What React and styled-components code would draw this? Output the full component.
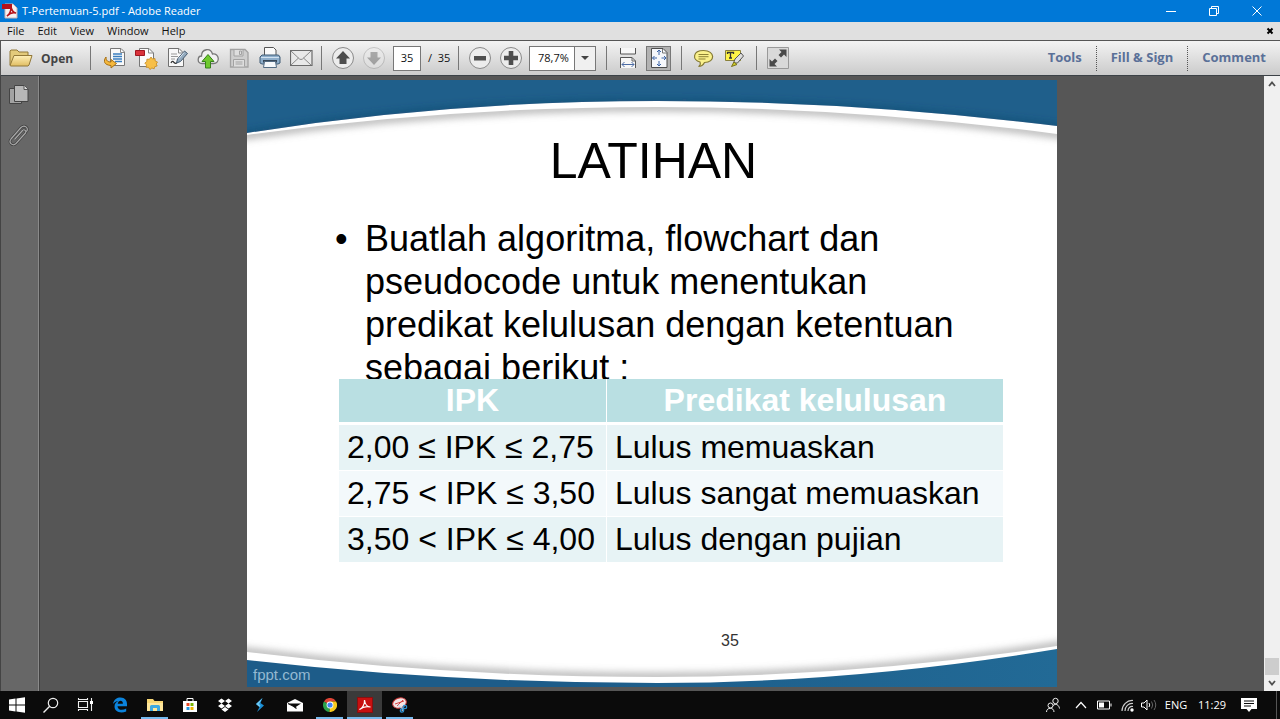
import React from "react";
import styled, { createGlobalStyle } from "styled-components";

const Global = createGlobalStyle`
  * { box-sizing: border-box; }
  body { margin: 0; background: #565656; font-family: "Open Sans", "Noto Sans", sans-serif; font-size: 11px; color: #111; }
  button, input, select { font: inherit; color: inherit; }
  button { border: 0; background: none; padding: 0; }
  svg { display: block; }
`;

const Page = styled.div`
  display: flex;
  flex-direction: column;
  min-height: 100vh;
`;

/* ---------- window chrome ---------- */
const TitleBar = styled.header`
  display: flex;
  align-items: center;
  height: 22px;
  padding: 0 2px;
  background: #0078d7;
  color: #fff;
`;
const WindowTitle = styled.h1`
  flex: 1;
  margin: 0 0 0 4px;
  font-size: 11px;
  line-height: 20px;
  font-weight: 400;
`;
const WindowButton = styled.button`
  display: grid;
  place-items: center;
  width: 43px;
  height: 20px;
`;
const MenuBar = styled.nav`
  display: flex;
  align-items: center;
  height: 19px;
  padding: 0 6px 0 7px;
  gap: 13px;
  background: #e0e0e0;
  border-bottom: 1px solid #555;
`;
const MenuItem = styled.button`
  line-height: 16px;
`;
const MenuClose = styled.button`
  margin-left: auto;
`;

/* ---------- toolbar ---------- */
const ToolBar = styled.div`
  display: flex;
  align-items: center;
  height: 35px;
  background: linear-gradient(#f3f3f3, #cbcbcb);
  border-bottom: 1px solid #3c4247;
  border-left: 1px solid #555;
`;
const OpenButton = styled.button`
  display: flex;
  align-items: center;
  gap: 8px;
  width: 82px;
  padding-left: 8px;
  font-size: 12px;
  font-weight: 700;
  color: #444;
`;
const ToolSpacer = styled.span`
  width: 4px;
`;
const ToolButton = styled.button`
  display: grid;
  place-items: center;
  width: 31px;
  height: 30px;
`;
const Pressed = styled.span`
  display: grid;
  place-items: center;
  width: 25px;
  height: 25px;
  background: #b2b2b2;
  border: 1px solid #777;
`;
const Divider = styled.span`
  width: 1px;
  height: 24px;
  margin: 0 5px 0 ${(p) => p.$before || 7}px;
  background: #777;
`;
const PageInput = styled.input`
  width: 28px;
  height: 25px;
  margin-left: 4px;
  padding: 0 0 2px;
  border: 1px solid #777;
  background: #fff;
  text-align: center;
`;
const PageTotal = styled.span`
  width: 30px;
  padding: 0 0 2px 7px;
  white-space: pre;
`;
const ZoomBox = styled.span`
  display: flex;
  position: relative;
  width: 67px;
  height: 25px;
  margin-left: 3px;
`;
const ZoomSelect = styled.select`
  appearance: none;
  width: 100%;
  padding: 0 0 2px 8px;
  border: 1px solid #777;
  border-radius: 0;
  background: #fff;
`;
const ZoomArrow = styled.span`
  position: absolute;
  inset: 1px 1px 1px auto;
  display: grid;
  place-items: center;
  width: 21px;
  background: #f0f0f0;
  border-left: 1px solid #777;
  pointer-events: none;
`;
const PanelLinks = styled.div`
  display: flex;
  margin-left: auto;
`;
const PanelButton = styled.button`
  height: 25px;
  padding: 0 14px 2px;
  font-size: 13px;
  font-weight: 700;
  color: #5a7098;
  white-space: nowrap;
  & + & { border-left: 1px dotted #555; }
`;

/* ---------- document area ---------- */
const Workspace = styled.div`
  display: flex;
  flex: 1;
`;
const SidePanel = styled.aside`
  display: flex;
  flex-direction: column;
  align-items: center;
  flex: none;
  width: 40px;
  padding: 7px 5px 0 0;
  gap: 16px;
  background: #676767;
  border-left: 1px solid #444;
  border-right: 1px solid #404040;
  box-shadow: inset -1px 0 #8a8a8a;
`;
const SideButton = styled.button`
  display: grid;
  place-items: center;
  width: 24px;
  height: 24px;
`;
const Viewport = styled.main`
  display: flex;
  flex: 1;
  justify-content: center;
  align-items: flex-start;
  padding: 4px 0;
  background: #565656;
`;
const ScrollBar = styled.div`
  display: flex;
  flex-direction: column;
  flex: none;
  align-items: center;
  width: 16px;
  background: #f0f0f0;
`;
const ScrollButton = styled.button`
  display: grid;
  place-items: center;
  width: 16px;
  height: 16px;
`;
const ScrollThumb = styled.span`
  width: 14px;
  height: 17px;
  margin-top: auto;
  background: #cdcdcd;
`;

/* ---------- slide ---------- */
const Slide = styled.article`
  position: relative;
  display: flex;
  flex-direction: column;
  width: 100%;
  max-width: 810px;
  min-height: 607px;
  padding-top: 51px;
  overflow: hidden;
  background: #fff;
  color: #000;
  font-family: "Liberation Sans", Arial, sans-serif;
`;
const Backdrop = styled.svg`
  position: absolute;
  inset: 0;
  width: 100%;
  height: 100%;
`;
const SlideTitle = styled.h2`
  position: relative;
  margin: 0 0 26px;
  padding-left: 3px;
  font-size: 50px;
  line-height: 60px;
  font-weight: 400;
  text-align: center;
`;
/* the last line runs under the table, so its descenders are cut off */
const Bullets = styled.ul`
  position: relative;
  height: 162px;
  margin: 0 0 0 88px;
  padding: 0;
  overflow: hidden;
  list-style: none;
`;
const Bullet = styled.li`
  display: flex;
  max-width: 632px;
  font-size: 36px;
  line-height: 43px;
  &::before { content: "•"; flex: none; width: 30px; }
`;
const Grades = styled.table`
  position: relative;
  width: 664px;
  margin-left: 92px;
  border-collapse: separate;
  border-spacing: 0;
  font-size: 32px;
  background: #fff;
`;
const HeadCell = styled.th`
  width: ${(p) => p.$width || "auto"};
  padding: 0;
  line-height: 43px;
  background: #b9dfe2;
  color: #fff;
  border-bottom: 3px solid #fff;
  & + th { border-left: 1px solid #fff; }
`;
const GradeRow = styled.tr`
  background: ${(p) => (p.$pale ? "#f3f9fb" : "#e7f3f5")};
`;
const Cell = styled.td`
  padding: 0 8px;
  line-height: 45px;
  white-space: nowrap;
  & + & { border-left: 1px solid #fff; }
  tr + tr > & { border-top: 1px solid #fff; }
`;
const SlideFooter = styled.footer`
  position: relative;
  display: grid;
  grid-template-columns: 1fr 1fr 1fr;
  margin-top: auto;
  padding: 0 6px 3px;
`;
const Brand = styled.span`
  align-self: end;
  font-size: 15px;
  line-height: 18px;
  color: #94b9d2;
`;
const SlideNumber = styled.span`
  margin: 0 0 34px 202px;
  font-size: 16px;
  line-height: 18px;
  color: #333;
`;

/* ---------- taskbar ---------- */
const TaskBar = styled.footer`
  display: flex;
  height: 28px;
  background: #0b0b0b;
  color: #fff;
`;
const TaskButton = styled.button`
  display: grid;
  place-items: center;
  width: ${(p) => (p.$system ? 34 : 35)}px;
  height: 28px;
  background: ${(p) =>
    p.$active
      ? "linear-gradient(#76b9ed, #76b9ed) bottom / 100% 2px no-repeat #3a3a3a"
      : p.$running
      ? "linear-gradient(#76b9ed, #76b9ed) bottom / 27px 2px no-repeat"
      : "none"};
`;
const Tray = styled.div`
  display: flex;
  margin-left: auto;
`;
const TrayButton = styled.button`
  display: grid;
  place-items: center;
  width: ${(p) => p.$width}px;
`;
const TrayText = styled(TrayButton)`
  padding-bottom: 2px;
`;
const ShowDesktop = styled.button`
  width: 4px;
  margin-left: 10px;
  border-left: 1px solid #555;
`;

/* ---------- icons ---------- */
const Svg = ({ w = 24, h = 24, children, ...rest }) => (
  <svg width={w} height={h} viewBox={`0 0 ${w} ${h}`} fill="none" aria-hidden="true" {...rest}>
    {children}
  </svg>
);
const ReaderIcon = () => (
  <Svg w={16} h={16}>
    <path d="M3 1h8l4 4v10H3z" fill="#f6f2f2" stroke="#c9b4b4" />
    <path d="M0 1h10v5H0z" fill="#b5121b" />
    <path d="M5 13c3-2 4-6 4-9 1 4 3 6 5 6-3-1-6 0-9 3z" stroke="#b5121b" strokeWidth="1.6" />
  </Svg>
);
const FolderIcon = () => (
  <Svg w={24} h={20}>
    <path d="M1 17V3l1-1h6l2 2h9v4" fill="#e3ca7b" stroke="#927838" />
    <path d="M1 17.500 5 7.500h18l-3 9.500-1 1H2z" fill="url(#folder)" stroke="#927838" />
    <defs><linearGradient id="folder" x2="0" y2="1"><stop stopColor="#fff0b8" /><stop offset="1" stopColor="#e0bd62" /></linearGradient></defs>
  </Svg>
);
const ConvertIcon = () => (
  <Svg>
    <path d="M6.500 2.500H17l3.500 3.500v13.500h-14z" fill="#fafafa" stroke="#777" />
    <path d="M16.500 2.500v4h4" stroke="#888" />
    <path d="M9 8h9M9 10.500h9M9 13h9M11 15.500h7" stroke="#3b7fc0" strokeWidth="1.400" />
    <path d="M2 11c-3 4-2 8 5 8.500V22l5.500-4.500L7 13.500V16c-3 0-5-1-5-5z" fill="#f5b83d" stroke="#a56f16" />
  </Svg>
);
const CreateIcon = () => (
  <Svg>
    <path d="M4.500 2.500H14l4.500 4.500v13.500h-14z" fill="#fafafa" stroke="#777" />
    <path d="M13.500 2.500V7h5" stroke="#888" />
    <path d="M.5 4.500h9v5h-9z" fill="#d9323a" stroke="#a01720" />
    <path d="m16 11 1.500 2 2.500-.5.200 2.500 2.300 1-1.300 2 1 2-2.400.6-.6 2.200-2.300-.8-2 1.500-1.300-2.100-2.500-.1.400-2.400-1.700-1.800 2-1.500.1-2.400 2.500.1z" fill="#f7bf48" stroke="#c48920" strokeWidth=".8" />
  </Svg>
);
const SignIcon = () => (
  <Svg>
    <path d="M2.500 2.500H13l4.500 4.500v13.500h-15z" fill="#f8f8f8" stroke="#707070" />
    <path d="M12.500 2.500V7h5" stroke="#888" />
    <path d="M5 8h6M5 10.500h7M5 13h4" stroke="#999" />
    <path d="M5 17c1-2 2-2 3-.5 1 1 2 1 3 .5" stroke="#333" strokeWidth="1.300" />
    <path d="m10.500 17 1-4 7-8 3 2.500-7 8z" fill="#93aabe" stroke="#465b70" />
    <path d="m13 12.500 5-6" stroke="#dce8f1" />
  </Svg>
);
const CloudIcon = () => (
  <Svg>
    <path d="M5 17.500C-.5 17.500.5 10 4.500 10 4.500 3 13.500 1 15.500 8c7-1 8 9.500 1 9.500z" fill="#f1f1f1" stroke="#777" strokeWidth="1.300" />
    <path d="m11 8.500 6 7h-3.500V22h-5v-6.500H5z" fill="#6fc92f" stroke="#36811a" />
  </Svg>
);
const SaveIcon = () => (
  <Svg>
    <path d="M2.500 3.500H17l3 3v14.500H2.500z" fill="#cecece" stroke="#a2a2a2" strokeWidth="1.300" />
    <path d="M6 4v6h9V4M5.500 20.500v-7h11v7" fill="#dedede" stroke="#a2a2a2" />
    <path d="M11.500 5v3.500h2V5zM7.500 16h7M7.500 18h7" stroke="#a2a2a2" />
  </Svg>
);
const PrintIcon = () => (
  <Svg>
    <path d="M5.500 9V1.500h9l2.500 2.500V9" fill="#fafafa" stroke="#555" />
    <path d="M3 9h16.500l1.500 2v6l-2 1H3l-2-1v-6z" fill="#8eaecb" stroke="#3f5a74" />
    <path d="M2 11.500h18" stroke="#d0e1f0" />
    <path d="M4 14h14v2.500H4z" fill="#37485a" />
    <path d="M5.500 15.500h11l1 6h-13z" fill="#f5f8fb" stroke="#536b83" />
  </Svg>
);
const MailToolIcon = () => (
  <Svg>
    <path d="M.5 4.500h21.500v15H.5z" fill="#e9e9e9" stroke="#6b6b6b" strokeWidth="1.200" />
    <path d="m1 5 8.500 8q1.500 1 3 0L21 5M1 19l7.500-7M21 19l-7.500-7" stroke="#888" />
  </Svg>
);
const RoundIcon = ({ faded, path }) => (
  <Svg opacity={faded ? 0.4 : 1}>
    <circle cx="12" cy="12" r="10.500" fill="#ececec" stroke="#8a8a8a" />
    <path d={path} fill="#4e4e4e" />
  </Svg>
);
const FitWidthIcon = () => (
  <Svg>
    <path d="M4.500 2v6h15V2" fill="#f7f7f7" stroke="#555" />
    <path d="M4.500 22V11.500H16l3.500 3.500v7" fill="#f7f7f7" stroke="#555" />
    <path d="M16 11.500V15h3.500" stroke="#666" />
    <path d="M6 18.500h12M8.500 16 6 18.500 8.500 21M15.500 16l2.500 2.500-2.500 2.500" stroke="#4c6ca5" />
  </Svg>
);
const FitPageIcon = () => (
  <Svg w={20} h={22}>
    <path d="M2.500 1.500H14l4 4v15H2.500z" fill="#f5f7fb" stroke="#4d4d4d" />
    <path d="M13.500 2v4H18" stroke="#777" />
    <path d="M10 3v5M8 5l2-2 2 2M10 19v-5M8 17l2 2 2-2M3.500 11H8M5.500 9l-2 2 2 2M17 11h-4.500M15 9l2 2-2 2" stroke="#3d65a8" />
  </Svg>
);
const CommentIcon = () => (
  <Svg>
    <path d="M12.500 4.500c12 0 12 12 1 12-1 2-3 4-6 4 2-1 2-3 1.500-4.500-8-2-7.500-11.500 3.500-11.500z" fill="#faf18c" stroke="#857a35" strokeWidth="1.200" />
    <path d="M7.500 8.500h10M7.500 10.700h10M7.500 13h7" stroke="#8d8235" />
  </Svg>
);
const HighlightIcon = () => (
  <Svg>
    <path d="M3.500 4.500h15v10h-15z" fill="#fff447" stroke="#89803b" />
    <path d="M5.500 8V6.500h6V8M8.500 6.500V12M7 12h3" stroke="#333" strokeWidth="1.300" />
    <path d="m11.500 17 1.500-4 6-6 2.500 3-6 7z" fill="#ddd" stroke="#555" />
    <path d="M9.500 20.500 12 16l3 2.500z" fill="#d3cf25" stroke="#77711b" />
  </Svg>
);
const ExpandIcon = () => (
  <Svg>
    <path d="M1.500 1.500h21v21h-21z" fill="#d9d9d9" stroke="#999" />
    <path d="M20.500 3.500V11L18 8.500l-3 3-2.500-2.500 3-3L13 3.500zM3.500 20.500V13L6 15.500l3-3 2.500 2.500-3 3 2.500 2.500z" fill="#4a4a4a" />
  </Svg>
);
const PagesIcon = () => (
  <Svg>
    <path d="M3.500 5.500h12v15h-12z" fill="#a3a3a3" stroke="#444" />
    <path d="M8.500 2.500h10l3.500 3.500v12.500H8.500z" fill="#b7b7b7" stroke="#444" />
    <path d="M18 2.500V6.500h4" fill="#ddd" stroke="#555" />
  </Svg>
);
const clipOutline = "M8.500 16.500 16.500 7.500c1.500-2 4.500.5 3 2.500L10 20.500c-3 3-8-.5-5-4.500L15 4.500c3.500-3.500 8 .5 5.500 4";
const ClipIcon = () => (
  <Svg>
    <path d={clipOutline} stroke="#3e3e3e" strokeWidth="2.600" />
    <path d={clipOutline} stroke="#a9a9a9" strokeWidth="1.200" />
  </Svg>
);

const EdgeIcon = () => (
  <Svg w={16} h={16}>
    <path d="M1 7C2 2 5 .5 8.500.5c4.500 0 6.500 3 6.500 6.500v2.200H5.500c.2 4 5 4.500 8.700 2.300v3C8 17 2.500 14.500 2.500 9.500c0-2.800 1.700-4.700 4-5.500C4 4 2 5.500 1 7zm4.700-.2h5.200C11 2.500 6.300 3 5.700 6.800z" fill="#0b83dc" fillRule="evenodd" />
  </Svg>
);
const ExplorerIcon = () => (
  <Svg w={16} h={16}>
    <path d="M0 2h6l1.500 2H16v10H0z" fill="#f8d775" />
    <path d="M0 6h16v8H0z" fill="#ffe79b" />
    <path d="M3 14V9.500Q3 8 4.500 8h7Q13 8 13 9.500V14h-3v-3H6v3z" fill="#3fa9e0" />
  </Svg>
);
const StoreIcon = () => (
  <Svg w={16} h={16}>
    <path d="M5 4V1.500h6V4" stroke="#fff" />
    <path d="M1 4h14v11H1z" fill="#fff" />
    <path d="M4.500 6H7.500v3h-3z" fill="#e74825" /><path d="M8.500 6h3v3h-3z" fill="#7bb705" />
    <path d="M4.500 10h3v3h-3z" fill="#2296de" /><path d="M8.500 10h3v3h-3z" fill="#f2b400" />
  </Svg>
);
const DropboxIcon = () => (
  <Svg w={16} h={16}>
    <path d="m4.500 1.500 3.500 2.500-3.500 2.500L1 4zM11.500 1.500 15 4l-3.500 2.500L8 4zM4.500 6.500 8 9l-3.500 2.500L1 9zM11.500 6.500 15 9l-3.500 2.500L8 9zM8 10l3.500 2.500L8 15l-3.500-2.500z" fill="#fff" />
  </Svg>
);
const BoltIcon = () => (
  <Svg w={16} h={16}>
    <path d="M10.500 1 4 7l3.500 3L5 15l7-6.500L8.500 6z" fill="#1b8ed4" />
    <path d="M10.500 1 4 7l3.500 3 1-1.500L7 7z" fill="#6cc9f5" />
  </Svg>
);
const MailIcon = () => (
  <Svg w={16} h={16}>
    <path d="M0 6 8 2l8 4v8.500H0z" fill="#fff" />
    <path d="M2 6.500h12L8 10.500z" fill="#0b0b0b" />
    <path d="m1 6.500 6 3 2.500 2" stroke="#0b0b0b" strokeWidth="1.200" />
  </Svg>
);
const ChromeIcon = () => (
  <Svg w={14} h={14}>
    <path d="M7 7 .9 3.500A7 7 0 0 1 13.100 3.500H7z" fill="#df4335" />
    <path d="M7 7 .9 3.500A7 7 0 0 0 6.500 14z" fill="#2ba24c" />
    <path d="M7 7 6.500 14A7 7 0 0 0 13.100 3.500H7z" fill="#f8c91d" />
    <circle cx="7" cy="7" r="3.400" fill="#fff" /><circle cx="7" cy="7" r="2.600" fill="#4285f4" />
  </Svg>
);
const AcrobatIcon = () => (
  <Svg w={16} h={16}>
    <rect x=".5" y=".5" width="15" height="15" fill="#c81010" stroke="#881010" />
    <path d="M2.500 12.500C5 12 8 7 7.500 3c.5 4 3 7 6 7-4-1-8 0-11 2.500z" stroke="#fff" strokeWidth="1.200" />
  </Svg>
);
const SnipIcon = () => (
  <Svg w={16} h={16}>
    <ellipse cx="7.500" cy="6" rx="7" ry="5" transform="rotate(-18 7.500 6)" fill="#f4e4e4" stroke="#c83535" />
    <path d="m3 7 9-3M5 9l6-6" stroke="#d64545" />
    <path d="m6 8 6 5M12.500 7 10 14" stroke="#c5d9ea" strokeWidth="1.200" />
    <circle cx="13" cy="10" r="1.700" stroke="#2d8fd0" strokeWidth="1.300" />
    <circle cx="10" cy="13.500" r="1.700" stroke="#2d8fd0" strokeWidth="1.300" />
  </Svg>
);

const tools = [
  ["Convert PDF", ConvertIcon],
  ["Create PDF", CreateIcon],
  ["Sign", SignIcon],
  ["Upload", CloudIcon],
  ["Save", SaveIcon],
  ["Print", PrintIcon],
  ["Email", MailToolIcon],
];
const grades = [
  ["2,00 ≤ IPK ≤ 2,75", "Lulus memuaskan"],
  ["2,75 < IPK ≤ 3,50", "Lulus sangat memuaskan"],
  ["3,50 < IPK ≤ 4,00", "Lulus dengan pujian"],
];
const apps = [
  ["Edge", EdgeIcon],
  ["File Explorer", ExplorerIcon, "running"],
  ["Store", StoreIcon],
  ["Dropbox", DropboxIcon],
  ["Shortcut", BoltIcon],
  ["Mail", MailIcon],
  ["Chrome", ChromeIcon, "running"],
  ["Adobe Reader", AcrobatIcon, "active"],
  ["Snipping Tool", SnipIcon, "running"],
];

const SlideBackdrop = () => (
  <Backdrop viewBox="0 0 810 607" preserveAspectRatio="none" fill="none" aria-hidden="true">
    <defs>
      <filter id="soft" x="-5%" y="-60%" width="110%" height="220%"><feGaussianBlur stdDeviation="4" /></filter>
      <clipPath id="inner"><path d="M0 55Q200 27 410 27Q605 27 810 54V566Q605 597 410 597Q200 597 0 572z" /></clipPath>
      <clipPath id="top"><path d="M0 0h810v46Q605 21 410 21Q200 21 0 53z" /></clipPath>
      <linearGradient id="sea"><stop offset=".4" stopColor="#1d5c89" /><stop offset="1" stopColor="#226a96" /></linearGradient>
    </defs>
    <path d="M0 0h810v46Q605 21 410 21Q200 21 0 53z" fill="#1f5f8b" />
    <g clipPath="url(#top)"><path d="M-20 57L0 54Q200 22 410 22Q605 22 810 47L830 50" stroke="#173f60" strokeWidth="3" filter="url(#soft)" /></g>
    <path d="M0 580Q200 603 410 603Q605 603 810 569V607H0z" fill="url(#sea)" />
    <g clipPath="url(#inner)">
      <path d="M-20 58L0 55Q200 27 410 27Q605 27 810 54L830 57" stroke="#888" strokeWidth="5" filter="url(#soft)" />
      <path d="M-20 569L0 572Q200 597 410 597Q605 597 810 566L830 563" stroke="#888" strokeWidth="5" filter="url(#soft)" />
    </g>
  </Backdrop>
);

export default function App() {
  return (
    <Page>
      <Global />
      <TitleBar>
        <ReaderIcon />
        <WindowTitle>T-Pertemuan-5.pdf - Adobe Reader</WindowTitle>
        <WindowButton aria-label="Minimize"><Svg w={10} h={10}><path d="M0 5.500h10" stroke="#fff" /></Svg></WindowButton>
        <WindowButton aria-label="Restore"><Svg w={10} h={10}><path d="M.5 2.500h7v7h-7zM2.500 2V.5h7v7H8" stroke="#fff" /></Svg></WindowButton>
        <WindowButton aria-label="Close"><Svg w={10} h={10}><path d="m.5.5 9 9m0-9-9 9" stroke="#fff" /></Svg></WindowButton>
      </TitleBar>
      <MenuBar>
        {["File", "Edit", "View", "Window", "Help"].map((m) => <MenuItem key={m}>{m}</MenuItem>)}
        <MenuClose aria-label="Close document"><Svg w={8} h={8}><path d="m1.500 1.500 5 5m0-5-5 5" stroke="#000" strokeWidth="2" /></Svg></MenuClose>
      </MenuBar>
      <ToolBar>
        <OpenButton><FolderIcon />Open</OpenButton>
        <Divider />
        <ToolSpacer />
        {tools.map(([label, Icon]) => <ToolButton key={label} aria-label={label}><Icon /></ToolButton>)}
        <Divider $before={4} />
        <ToolButton aria-label="Previous page"><RoundIcon path="m12 5 7 7.500h-3.500V18h-7v-5.500H5z" /></ToolButton>
        <ToolButton aria-label="Next page"><RoundIcon faded path="m12 19-7-7.500h3.500V6h7v5.500H19z" /></ToolButton>
        <PageInput aria-label="Page" defaultValue="35" />
        <PageTotal>/  35</PageTotal>
        <Divider />
        <ToolButton aria-label="Zoom out"><RoundIcon path="M6 10h12v4.500H6z" /></ToolButton>
        <ToolButton aria-label="Zoom in"><RoundIcon path="M9.700 5h4.600v4.700H19v4.600h-4.700V19H9.700v-4.700H5V9.700h4.700z" /></ToolButton>
        <ZoomBox>
          <ZoomSelect aria-label="Zoom level" defaultValue="78,7%"><option>78,7%</option></ZoomSelect>
          <ZoomArrow><Svg w={8} h={4}><path d="M0 0h8L4 4z" fill="#444" /></Svg></ZoomArrow>
        </ZoomBox>
        <Divider $before={10} />
        <ToolButton aria-label="Fit width"><FitWidthIcon /></ToolButton>
        <ToolButton aria-label="Fit page"><Pressed><FitPageIcon /></Pressed></ToolButton>
        <Divider />
        <ToolButton aria-label="Add note"><CommentIcon /></ToolButton>
        <ToolButton aria-label="Highlight text"><HighlightIcon /></ToolButton>
        <Divider />
        <ToolButton aria-label="Full screen"><ExpandIcon /></ToolButton>
        <PanelLinks>
          {["Tools", "Fill & Sign", "Comment"].map((p) => <PanelButton key={p}>{p}</PanelButton>)}
        </PanelLinks>
      </ToolBar>

      <Workspace>
        <SidePanel>
          <SideButton aria-label="Page thumbnails"><PagesIcon /></SideButton>
          <SideButton aria-label="Attachments"><ClipIcon /></SideButton>
        </SidePanel>
        <Viewport>
          <Slide>
            <SlideBackdrop />
            <SlideTitle>LATIHAN</SlideTitle>
            <Bullets>
              <Bullet>Buatlah algoritma, flowchart dan pseudocode untuk menentukan predikat kelulusan dengan ketentuan sebagai berikut :</Bullet>
            </Bullets>
            <Grades>
              <thead><tr><HeadCell $width="267px">IPK</HeadCell><HeadCell>Predikat kelulusan</HeadCell></tr></thead>
              <tbody>
                {grades.map(([range, grade], i) => (
                  <GradeRow key={range} $pale={i === 1}><Cell>{range}</Cell><Cell>{grade}</Cell></GradeRow>
                ))}
              </tbody>
            </Grades>
            <SlideFooter><Brand>fppt.com</Brand><SlideNumber>35</SlideNumber></SlideFooter>
          </Slide>
        </Viewport>
        <ScrollBar>
          <ScrollButton aria-label="Scroll up"><Svg w={8} h={6}><path d="m1 5 3-3.500L7 5" stroke="#505050" strokeWidth="1.800" /></Svg></ScrollButton>
          <ScrollThumb />
          <ScrollButton aria-label="Scroll down"><Svg w={8} h={6}><path d="m1 1 3 3.500L7 1" stroke="#505050" strokeWidth="1.800" /></Svg></ScrollButton>
        </ScrollBar>
      </Workspace>

      <TaskBar>
        <TaskButton $system aria-label="Start"><Svg w={16} h={16}><path d="M0 2.500 6.500 1.500v6H0zM7.500 1.400 16 .2v7.300H7.500zM0 8.500h6.500v6L0 13.500zM7.500 8.500H16v7.300l-8.500-1.200z" fill="#fff" /></Svg></TaskButton>
        <TaskButton $system aria-label="Search"><Svg w={16} h={16}><circle cx="10" cy="6" r="4.700" stroke="#eee" strokeWidth="1.200" /><path d="M6.700 9.300.5 15.500" stroke="#eee" strokeWidth="1.400" /></Svg></TaskButton>
        <TaskButton $system aria-label="Task view"><Svg w={16} h={16}><path d="M1.500 4.500h9v6h-9zM1.500 1v1.500h9V1M1.500 14v-1.500h9V14M14.500 1v13" stroke="#eee" strokeWidth="1.100" /><path d="M13 4h3v3h-3z" fill="#fff" /></Svg></TaskButton>
        {apps.map(([label, Icon, state]) => (
          <TaskButton key={label} aria-label={label} $running={state === "running"} $active={state === "active"}><Icon /></TaskButton>
        ))}
        <Tray>
          <TrayButton $width={31} aria-label="People"><Svg w={16} h={16}><circle cx="10.500" cy="4" r="2.700" stroke="#eee" /><path d="M8 8.500c3-2.500 6-.5 6.500 3" stroke="#eee" /><circle cx="5.500" cy="8.500" r="2.500" stroke="#eee" /><path d="M1.500 15c0-5 7.500-5 7.500 0" stroke="#eee" /></Svg></TrayButton>
          <TrayButton $width={25} aria-label="Hidden icons"><Svg w={12} h={8}><path d="m1 7 5-5.500L11 7" stroke="#fff" strokeWidth="1.200" /></Svg></TrayButton>
          <TrayButton $width={23} aria-label="Battery"><Svg w={15} h={10}><path d="M.5 1h12v8H.5zM14 3.500v3" stroke="#fff" /><path d="M2 2.500h5v5H2z" fill="#fff" /></Svg></TrayButton>
          <TrayButton $width={22} aria-label="Network"><Svg w={13} h={13}><path d="M1 12C1 6 6 1 12 1.500M4 12c0-4.500 3.500-8 8-7.500M7 12c0-3 2-5 5-4.500" stroke="#ccc" strokeWidth="1.200" /><circle cx="11" cy="11" r="1.700" fill="#fff" /></Svg></TrayButton>
          <TrayButton $width={22} aria-label="Volume"><Svg w={16} h={12}><path d="M.5 4h2.500l3-3v10L3 8H.5z" stroke="#fff" /><path d="M8 4q1.500 2 0 4" stroke="#fff" /><path d="M10.500 2.500q2.500 3.500 0 7M13 1q3.500 5 0 10" stroke="#666" /></Svg></TrayButton>
          <TrayText $width={32}>ENG</TrayText>
          <TrayText $width={40}>11:29</TrayText>
          <TrayButton $width={34} aria-label="Notifications"><Svg w={16} h={16}><path d="M0 1h16v11h-5.500L8 15l-2.500-3H0z" fill="#fff" /><path d="M3 4h10M3 6.500h10M3 9h7" stroke="#0b0b0b" /></Svg></TrayButton>
          <ShowDesktop aria-label="Show desktop" />
        </Tray>
      </TaskBar>
    </Page>
  );
}
